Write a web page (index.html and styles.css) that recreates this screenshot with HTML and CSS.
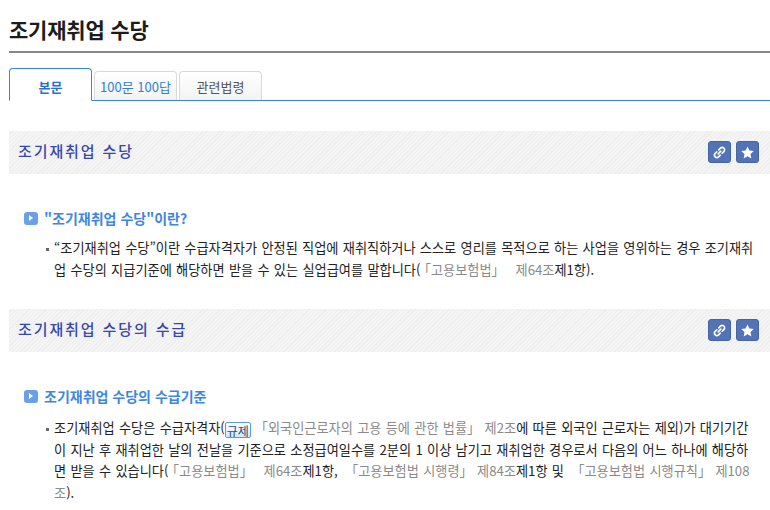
FILE: index.html
```html
<!DOCTYPE html>
<html lang="ko">
<head>
<meta charset="utf-8">
<title>조기재취업 수당</title>
<link rel="stylesheet" href="styles.css">
</head>
<body>
<h1 class="title">조기재취업 수당</h1>
<ul class="tabs">
  <li class="tab active">본문</li>
  <li class="tab link">100문 100답</li>
  <li class="tab">관련법령</li>
</ul>
<section class="section">
  <div class="bar">
    <h2 class="bar-title">조기재취업 수당</h2>
    <div class="bar-btns">
      <span class="btn"><svg viewBox="0 0 16 16" class="ico"><g fill="none" stroke="#fff" stroke-width="1.7" stroke-linecap="round"><path d="M6.6 9.4 9.4 6.6"/><path d="M7.2 5.2 9 3.4a2.5 2.5 0 0 1 3.6 3.6l-1.8 1.8"/><path d="M8.8 10.8 7 12.6A2.5 2.5 0 0 1 3.4 9l1.8-1.8"/></g></svg></span>
      <span class="btn"><svg viewBox="0 0 16 16" class="ico"><path fill="#fff" d="M8 1.6l2 4.3 4.7.6-3.500 3.200.9 4.600L8 12.100l-4.100 2.200.9-4.600L1.300 6.500 6 5.900z"/></svg></span>
    </div>
  </div>
  <h3 class="sub"><span class="sub-ico"></span>"조기재취업 수당"이란?</h3>
  <p class="item">“조기재취업 수당”이란 수급자격자가 안정된 직업에 재취직하거나 스스로 영리를 목적으로 하는 사업을 영위하는 경우 조기재취업 수당의 지급기준에 해당하면 받을 수 있는 실업급여를 말합니다(<span class="ref law">「고용보험법」 제64조</span>제1항).</p>
</section>
<section class="section second">
  <div class="bar">
    <h2 class="bar-title">조기재취업 수당의 수급</h2>
    <div class="bar-btns">
      <span class="btn"><svg viewBox="0 0 16 16" class="ico"><g fill="none" stroke="#fff" stroke-width="1.7" stroke-linecap="round"><path d="M6.6 9.4 9.4 6.6"/><path d="M7.2 5.2 9 3.4a2.5 2.5 0 0 1 3.6 3.6l-1.8 1.8"/><path d="M8.8 10.8 7 12.6A2.5 2.5 0 0 1 3.4 9l1.8-1.8"/></g></svg></span>
      <span class="btn"><svg viewBox="0 0 16 16" class="ico"><path fill="#fff" d="M8 1.6l2 4.3 4.7.6-3.500 3.200.9 4.600L8 12.100l-4.100 2.200.9-4.600L1.300 6.500 6 5.900z"/></svg></span>
    </div>
  </div>
  <h3 class="sub"><span class="sub-ico"></span>조기재취업 수당의 수급기준</h3>
  <p class="item">조기재취업 수당은 수급자격자(<span class="tag">규제</span><span class="ref">「외국인근로자의 고용 등에 관한 법률」 제2조</span>에 따른 외국인 근로자는 제외)가 대기기간이 지난 후 재취업한 날의 전날을 기준으로 소정급여일수를 2분의 1 이상 남기고 재취업한 경우로서 다음의 어느 하나에 해당하면 받을 수 있습니다(<span class="ref law">「고용보험법」 제64조</span>제1항, <span class="ref">「고용보험법 시행령」 제84조</span>제1항 및 <span class="ref">「고용보험법 시행규칙」 제108조</span>).</p>
</section>
</body>
</html>
```
FILE: styles.css
```css
* { box-sizing: border-box; }
html, body { margin: 0; padding: 0; }
body {
  width: 770px;
  height: 510px;
  overflow: hidden;
  padding-left: 9px;
  background: #fff;
  font-family: "Noto Sans CJK KR", "Noto Sans", sans-serif;
  color: #222;
}
.title {
  margin: 0;
  height: 53px;
  padding-top: 14px;
  font-size: 21px;
  line-height: 30px;
  font-weight: 700;
  letter-spacing: -0.2px;
  color: #1c1c1c;
  border-bottom: 2px solid #888;
}
.tabs {
  list-style: none;
  margin: 15px 0 0;
  padding: 0;
  height: 33px;
  display: flex;
  align-items: flex-end;
  gap: 2px;
  border-bottom: 1px solid #3b83dc;
}
.tab {
  width: 83px;
  height: 29px;
  background: linear-gradient(#fff, #f3f3f3);
  border: 1px solid #d9d9d9;
  border-bottom: 0;
  border-radius: 4px 4px 0 0;
  text-align: center;
  font-size: 13px;
  line-height: 29px;
  color: #555;
}
.tab.link { color: #2f7fd6; }
.tab.active {
  height: 33px;
  margin-bottom: -1px;
  background: #fff;
  border: 1px solid #3b83dc;
  border-bottom: 1px solid #fff;
  color: #2a6fc9;
  font-weight: 700;
  line-height: 35px;
}
.section { padding-top: 30px; }
.section.second { padding-top: 29px; }
.bar {
  height: 43px;
  padding: 0 11px 0 9px;
  display: flex;
  align-items: center;
  justify-content: space-between;
  background: repeating-linear-gradient(135deg, #f4f4f4 0, #f4f4f4 2px, #eeeeee 2px, #eeeeee 3px);
}
.bar-title {
  margin: 0 0 4px;
  font-size: 15px;
  font-weight: 500;
  letter-spacing: 1.9px;
  color: #3748ac;
}
.bar-btns { display: flex; gap: 5px; margin-bottom: 1px; }
.btn {
  width: 23px;
  height: 22px;
  display: flex;
  align-items: center;
  justify-content: center;
  background: #5273b8;
  border: 1px solid #46649f;
  border-radius: 3px;
}
.ico { width: 15px; height: 15px; display: block; }
.sub {
  margin: 33px 0 0 15px;
  display: flex;
  align-items: center;
  gap: 6px;
  font-size: 14px;
  line-height: 22px;
  font-weight: 700;
  color: #3f86dc;
}
.sub-ico {
  position: relative;
  width: 14px;
  height: 13px;
  background: #6aa0e4;
  border-radius: 3px;
}
.sub-ico::after {
  content: "";
  position: absolute;
  left: 5px;
  top: 3px;
  border-left: 4px solid #fff;
  border-top: 3.5px solid transparent;
  border-bottom: 3.5px solid transparent;
}
.item {
  position: relative;
  margin: 8px 0 0 45px;
  width: 702px;
  font-size: 13.2px;
  word-spacing: 0.6px;
  line-height: 21.5px;
  color: #222;
  word-break: break-all;
}
.second .item { margin-top: 10px; }
.item::before {
  content: "";
  position: absolute;
  left: -8px;
  top: 11px;
  width: 3px;
  height: 3px;
  background: #666;
}
.ref { color: #8a8a8a; padding-left: 3px; }
.ref.law { padding-left: 4px; word-spacing: 7px; }
.tag {
  display: inline-block;
  width: 26px;
  height: 16px;
  margin: 0 1px 0 0;
  vertical-align: -3px;
  text-align: center;
  font-size: 12px;
  line-height: 15px;
  color: #1d4e7c;
  background: linear-gradient(#fff, #d6e8f8);
  border: 1px solid #5e9bd3;
  border-radius: 2px;
}
```
